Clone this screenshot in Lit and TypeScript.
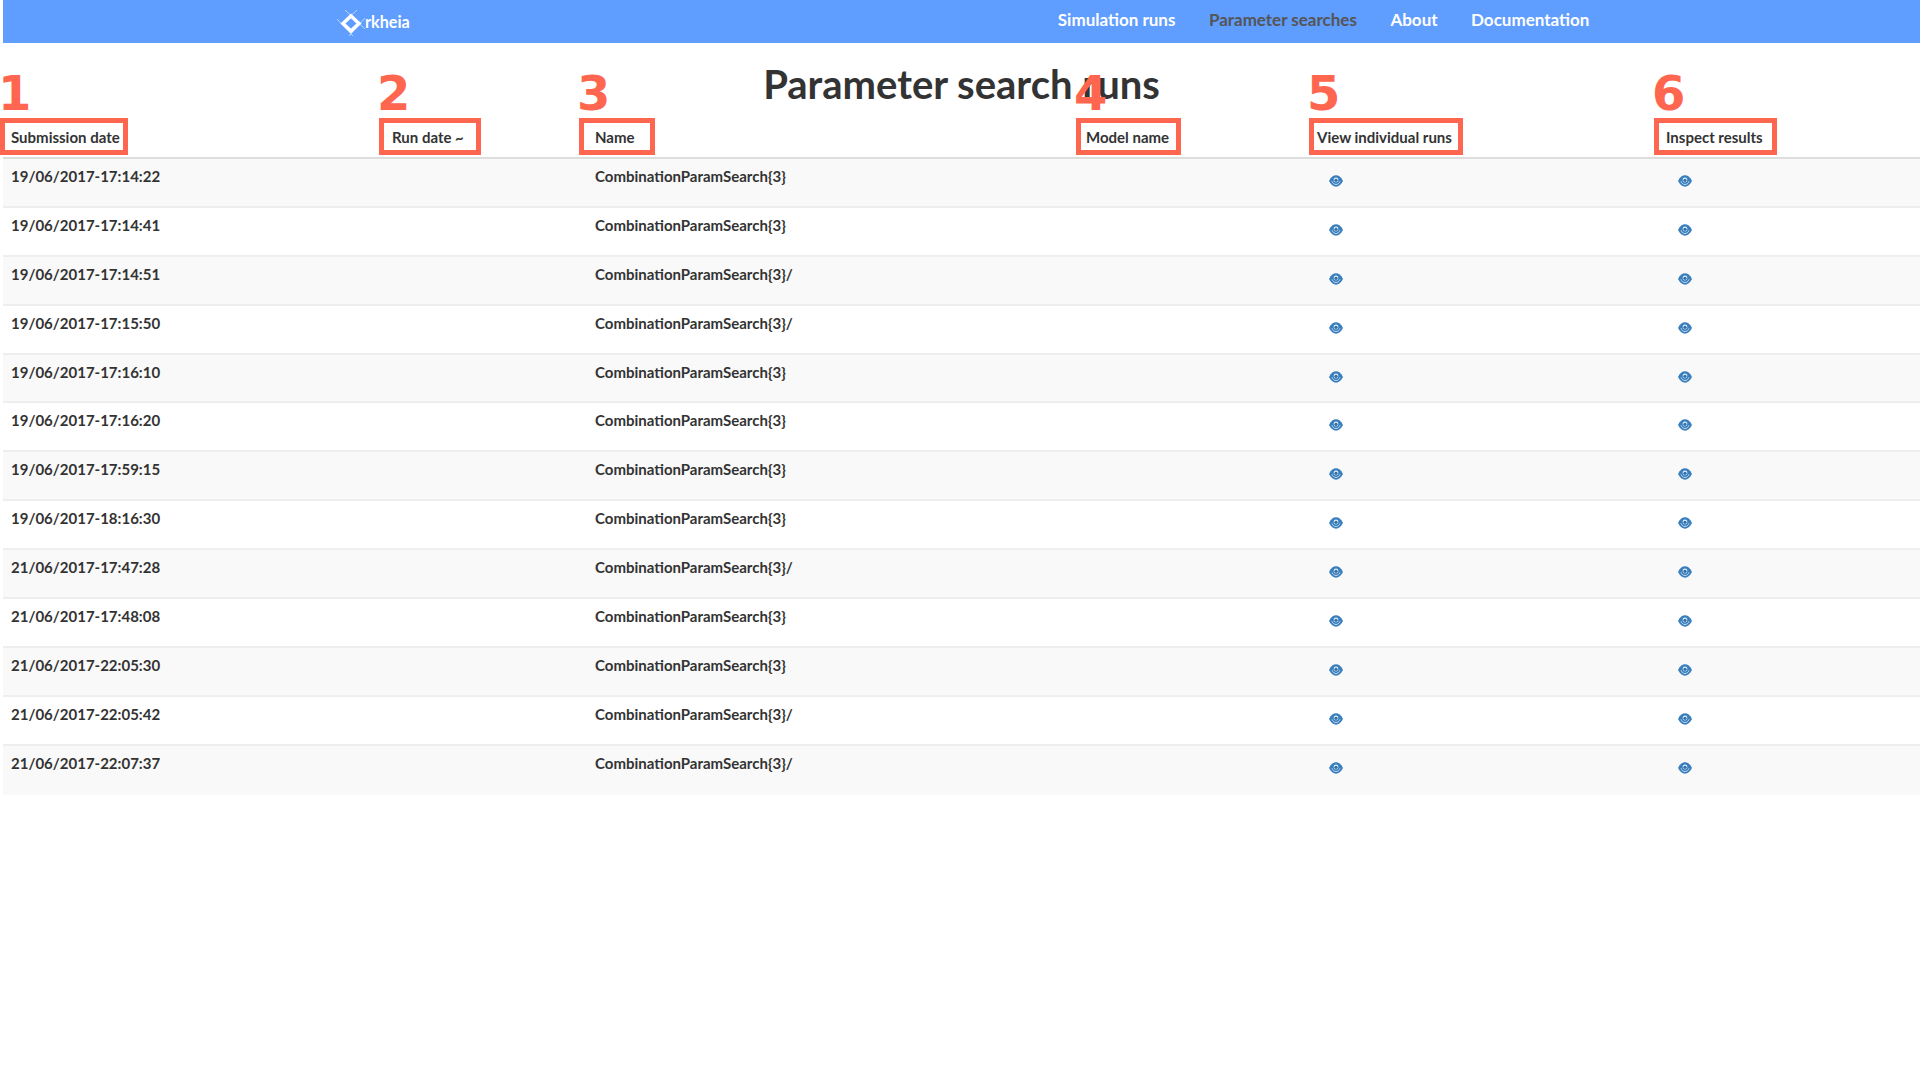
import { LitElement, css, html, svg } from 'lit'
import { customElement } from 'lit/decorators.js'

const rows = [
  ['19/06/2017-17:14:22', 'CombinationParamSearch{3}'],
  ['19/06/2017-17:14:41', 'CombinationParamSearch{3}'],
  ['19/06/2017-17:14:51', 'CombinationParamSearch{3}/'],
  ['19/06/2017-17:15:50', 'CombinationParamSearch{3}/'],
  ['19/06/2017-17:16:10', 'CombinationParamSearch{3}'],
  ['19/06/2017-17:16:20', 'CombinationParamSearch{3}'],
  ['19/06/2017-17:59:15', 'CombinationParamSearch{3}'],
  ['19/06/2017-18:16:30', 'CombinationParamSearch{3}'],
  ['21/06/2017-17:47:28', 'CombinationParamSearch{3}/'],
  ['21/06/2017-17:48:08', 'CombinationParamSearch{3}'],
  ['21/06/2017-22:05:30', 'CombinationParamSearch{3}'],
  ['21/06/2017-22:05:42', 'CombinationParamSearch{3}/'],
  ['21/06/2017-22:07:37', 'CombinationParamSearch{3}/'],
]

// red callouts drawn on top of the table header
const callouts = [
  { n: 1, x: 0, w: 128 },
  { n: 2, x: 379, w: 102 },
  { n: 3, x: 579, w: 76 },
  { n: 4, x: 1076, w: 105 },
  { n: 5, x: 1309, w: 154 },
  { n: 6, x: 1654, w: 123 },
]

const eye = svg`<svg class="eye" viewBox="0 0 14 12" width="14" height="12">
  <path fill="#3a7fbd" d="M0 6C2 2 4.400.3 7 .3s5 1.700 7 5.700c-2 4-4.400 5.700-7 5.700S2 10 0 6z"/>
  <path fill="none" stroke="#cfe0ef" stroke-width=".9" d="M3 6.300C3.800 8.500 5.200 9.500 7 9.500s3.200-1 4-3.200"/>
  <circle cx="7" cy="5" r="2.400" fill="#dfeaf4"/>
  <circle cx="7" cy="5.300" r="1.600" fill="#2f6fa8"/>
</svg>`

@customElement('app-root')
export class AppRoot extends LitElement {
  static styles = css`
    :host {
      display: block;
      position: relative;
      padding-left: 3px;
      font-family: Lato, sans-serif;
      color: #333;
      height: 1078px;
      box-sizing: border-box;
      overflow: hidden;
    }
    nav {
      display: flex;
      align-items: center;
      height: 43px;
      background: #5f9dff;
      padding-left: 331px;
      color: #fff;
      font-size: 17px;
      font-weight: 700;
    }
    .brand {
      display: flex;
      align-items: center;
      font-size: 16.200px;
    }
    .brand svg {
      margin-right: -3px;
      margin-top: 3px;
    }
    .links {
      display: flex;
      gap: 33.500px;
      margin-left: 648px;
      padding-bottom: 4px;
    }
    .links .active {
      color: #555;
    }
    h1 {
      margin: 0;
      height: 75px;
      padding-top: 16px;
      box-sizing: border-box;
      text-align: center;
      font-size: 40px;
      line-height: 50px;
      font-weight: 700;
    }
    .row {
      display: grid;
      grid-template-columns: 381px 203px 491px 231px 349px 1fr;
      box-sizing: border-box;
      font-size: 15px;
      font-weight: 700;
      line-height: 20px;
    }
    .row > div {
      padding: 8px;
    }
    .head {
      height: 41px;
      border-bottom: 2px solid #ddd;
    }
    .head > div {
      padding-top: 9px;
    }
    .body {
      height: 48.900px;
      border-bottom: 2px solid #eee;
    }
    .body:nth-child(odd) {
      background: #f9f9f9;
    }
    .body:last-child {
      border-bottom: 0;
    }
    .body > div {
      padding-top: 7px;
    }
    .body .view {
      padding: 16px 0 0 20px;
    }
    .body .inspect {
      padding: 16px 0 0 20px;
    }
    .eye {
      display: block;
    }
    .callout {
      position: absolute;
      top: 118px;
      height: 37px;
      box-sizing: border-box;
      border: 5px solid #ff6650;
    }
    .callout span {
      position: absolute;
      left: -7px;
      top: -58px;
      font: 700 48px/56px 'DejaVu Sans', sans-serif;
      color: #ff6650;
    }
  `

  render() {
    return html`
      <nav>
        <div class="brand">
          <svg width="34" height="28" viewBox="0 0 34 28">
            <path d="M17 7L25 14.500L17 22L9 14.500Z" fill="none" stroke="#fff" stroke-width="3.500"/>
            <path d="M11 1L31 20M23 1L9 14M3 10L19 27M31 9L15 27" fill="none" stroke="#fff" stroke-opacity=".55" stroke-width="1"/>
          </svg>
          <span>rkheia</span>
        </div>
        <div class="links">
          <span>Simulation runs</span>
          <span class="active">Parameter searches</span>
          <span>About</span>
          <span>Documentation</span>
        </div>
      </nav>
      <h1>Parameter search runs</h1>
      <div class="row head">
        <div>Submission date</div>
        <div>Run date ~</div>
        <div>Name</div>
        <div>Model name</div>
        <div>View individual runs</div>
        <div>Inspect results</div>
      </div>
      <div class="rows">
        ${rows.map(([date, name]) => html`
          <div class="row body">
            <div>${date}</div>
            <div></div>
            <div>${name}</div>
            <div></div>
            <div class="view">${eye}</div>
            <div class="inspect">${eye}</div>
          </div>
        `)}
      </div>
      ${callouts.map(c => html`
        <div class="callout" style="left:${c.x}px;width:${c.w}px"><span>${c.n}</span></div>
      `)}
    `
  }
}
